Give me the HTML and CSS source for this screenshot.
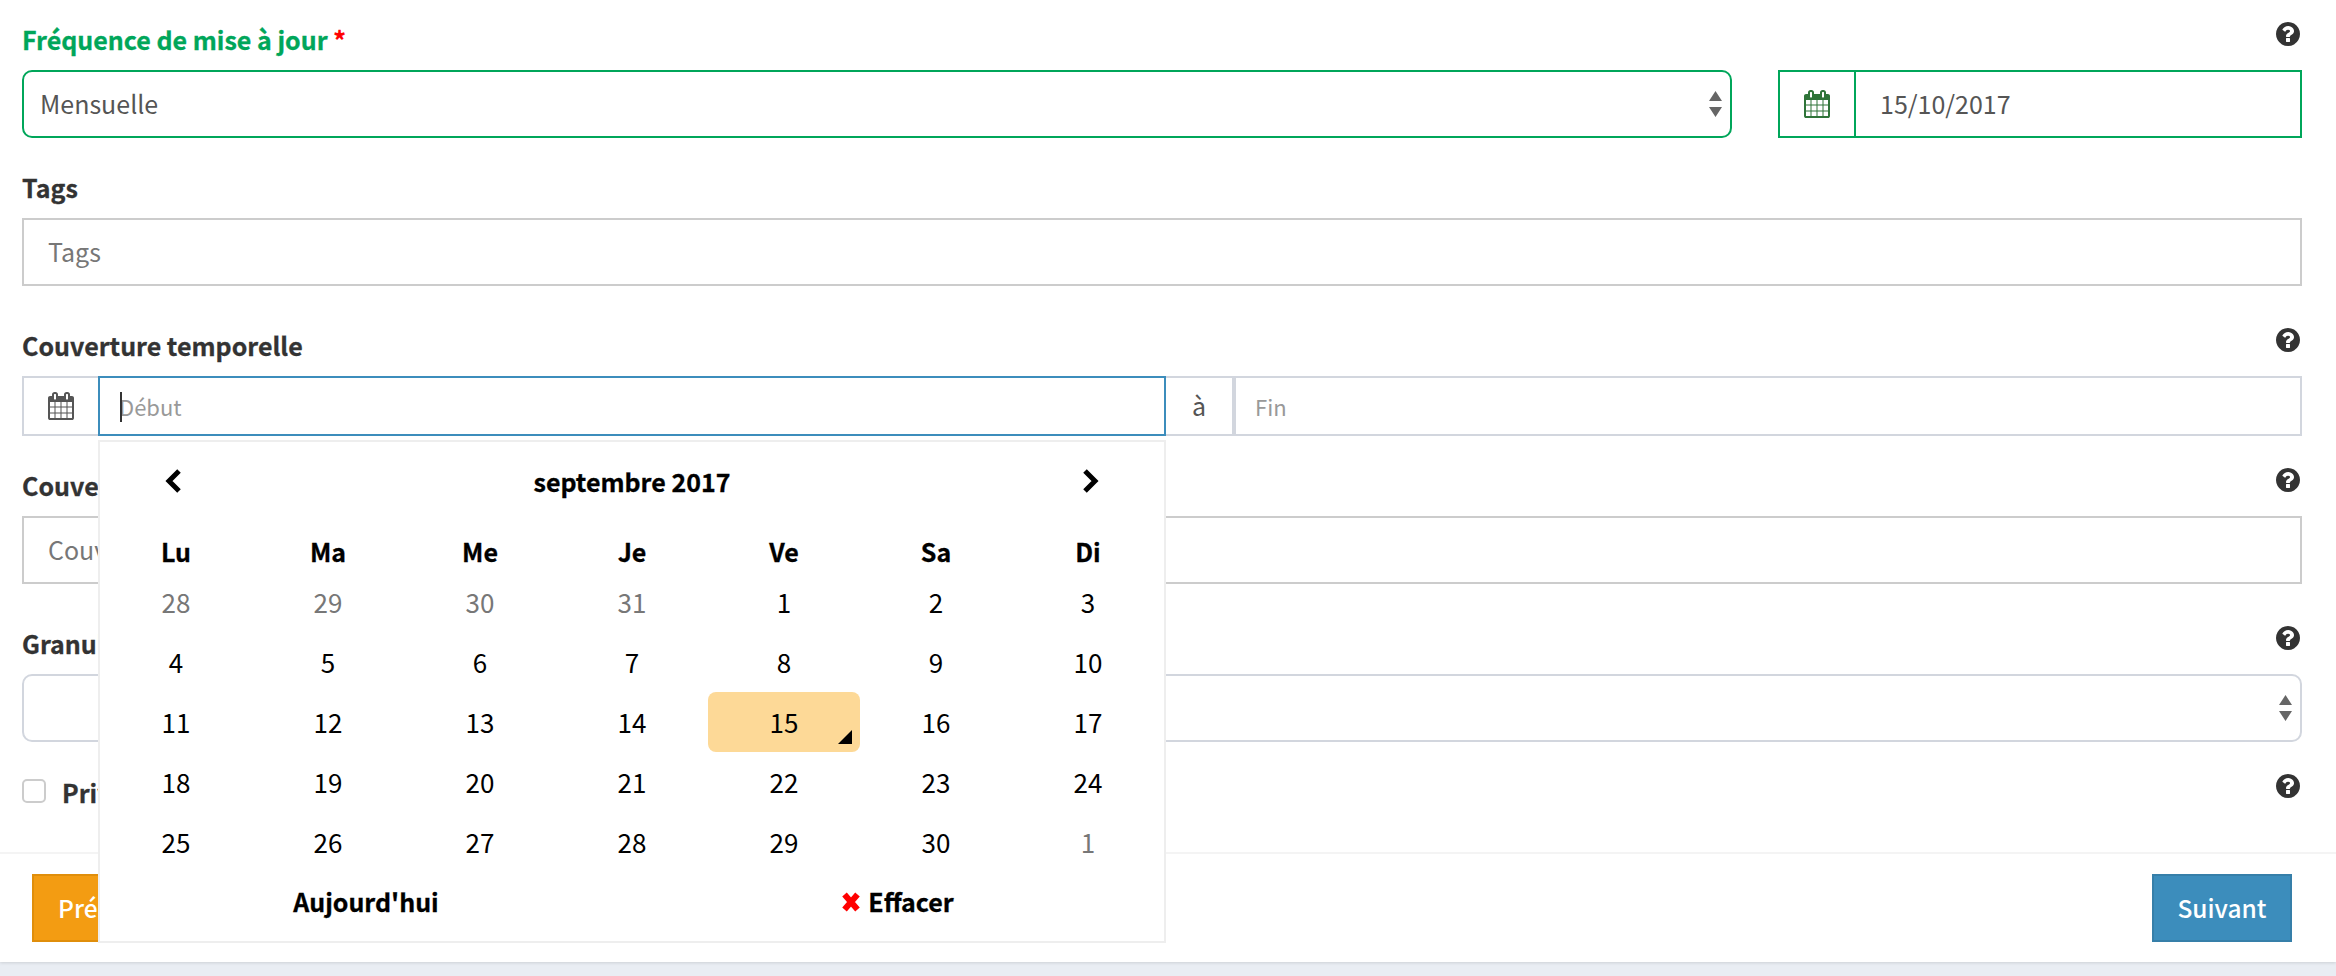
FILE: index.html
```html
<!DOCTYPE html>
<html lang="fr">
<head>
<meta charset="utf-8">
<title>Formulaire</title>
<link rel="stylesheet" href="styles.css">
</head>
<body>
<svg class="defs" width="0" height="0" aria-hidden="true">
  <symbol id="help" viewBox="0 0 1536 1536"><path d="M896 1376v-192q0-14-9-23t-23-9h-192q-14 0-23 9t-9 23v192q0 14 9 23t23 9h192q14 0 23-9t9-23zm256-672q0-88-55.5-163t-138.5-116-170-41q-243 0-371 213-15 24 8 42l132 100q7 6 19 6 16 0 25-12 53-68 86-92 34-24 86-24 48 0 85.5 26t37.5 59q0 38-20 61t-68 45q-63 28-115.5 86.5t-52.5 125.5v36q0 14 9 23t23 9h192q14 0 23-9t9-23q0-19 21.5-49.5t54.5-49.5q32-18 49-28.5t46-35 44.5-48 28-60.5 12.5-81zm384 192q0 209-103 385.5t-279.5 279.5-385.5 103-385.5-103-279.5-279.5-103-385.5 103-385.5 279.5-279.5 385.5-103 385.5 103 279.5 279.5 103 385.5z" transform="translate(0 -128)"/></symbol>
  <symbol id="cal" viewBox="0 0 1664 1792"><path d="M128 1664h288v-288h-288v288zm352 0h320v-288h-320v288zm-352-352h288v-320h-288v320zm352 0h320v-320h-320v320zm-352-384h288v-288h-288v288zm736 736h320v-288h-320v288zm-384-736h320v-288h-320v288zm768 736h288v-288h-288v288zm-384-352h320v-320h-320v320zm-352-864v-288q0-13-9.5-22.5t-22.5-9.5h-64q-13 0-22.5 9.5t-9.5 22.5v288q0 13 9.5 22.5t22.5 9.5h64q13 0 22.5-9.5t9.5-22.5zm736 864h288v-320h-288v320zm-384-384h320v-288h-320v288zm384 0h288v-288h-288v288zm32-480v-288q0-13-9.5-22.5t-22.5-9.5h-64q-13 0-22.5 9.5t-9.5 22.5v288q0 13 9.5 22.5t22.5 9.5h64q13 0 22.5-9.5t9.5-22.5zm384-64v1280q0 52-38 90t-90 38h-1408q-52 0-90-38t-38-90v-1280q0-52 38-90t90-38h128v-96q0-66 47-113t113-47h64q66 0 113 47t47 113v96h384v-96q0-66 47-113t113-47h64q66 0 113 47t47 113v96h128q52 0 90 38t38 90z"/></symbol>
  <symbol id="updown" viewBox="0 0 13 26"><path d="M6.5 0L13 10H0zM0 16h13L6.5 26z"/></symbol>
</svg>
<div class="page">
  <form class="form">
    <div class="group first">
      <div class="label-row">
        <label class="label valid">Fréquence de mise à jour <span class="req">*</span></label>
        <svg class="help"><use href="#help"/></svg>
      </div>
      <div class="freq-row">
        <div class="select valid-box"><span class="select-text">Mensuelle</span><svg class="updown"><use href="#updown"/></svg></div>
        <div class="date-box">
          <span class="date-addon"><svg class="cal cal-green"><use href="#cal"/></svg></span>
          <span class="date-value">15/10/2017</span>
        </div>
      </div>
    </div>

    <div class="group">
      <div class="label-row"><label class="label">Tags</label></div>
      <div class="input">Tags</div>
    </div>

    <div class="group wide">
      <div class="label-row">
        <label class="label">Couverture temporelle</label>
        <svg class="help"><use href="#help"/></svg>
      </div>
      <div class="range">
        <span class="range-addon"><svg class="cal"><use href="#cal"/></svg></span>
        <div class="range-input focus"><span class="caret"></span>Début</div>
        <span class="range-to">à</span>
        <div class="range-input end">Fin</div>

        <div class="picker">
          <div class="picker-head">
            <svg class="chev" viewBox="0 0 18 26"><path d="M15 3L5 13l10 10"/></svg>
            <span class="picker-title">septembre 2017</span>
            <svg class="chev" viewBox="0 0 18 26"><path d="M3 3l10 10L3 23"/></svg>
          </div>
          <div class="days">
            <span class="dow">Lu</span><span class="dow">Ma</span><span class="dow">Me</span><span class="dow">Je</span><span class="dow">Ve</span><span class="dow">Sa</span><span class="dow">Di</span>
            <span class="day old">28</span><span class="day old">29</span><span class="day old">30</span><span class="day old">31</span><span class="day">1</span><span class="day">2</span><span class="day">3</span>
            <span class="day">4</span><span class="day">5</span><span class="day">6</span><span class="day">7</span><span class="day">8</span><span class="day">9</span><span class="day">10</span>
            <span class="day">11</span><span class="day">12</span><span class="day">13</span><span class="day">14</span><span class="day today">15<i class="corner"></i></span><span class="day">16</span><span class="day">17</span>
            <span class="day">18</span><span class="day">19</span><span class="day">20</span><span class="day">21</span><span class="day">22</span><span class="day">23</span><span class="day">24</span>
            <span class="day">25</span><span class="day">26</span><span class="day">27</span><span class="day">28</span><span class="day">29</span><span class="day">30</span><span class="day old">1</span>
          </div>
          <div class="picker-foot">
            <span class="foot-btn">Aujourd'hui</span>
            <span class="foot-btn"><svg class="cross" viewBox="0 0 18 20"><path d="M2.5 2.5l13 15M15.5 2.5l-13 15"/></svg>Effacer</span>
          </div>
        </div>
      </div>
    </div>

    <div class="group">
      <div class="label-row">
        <label class="label">Couverture spatiale</label>
        <svg class="help"><use href="#help"/></svg>
      </div>
      <div class="input">Couverture spatiale</div>
    </div>

    <div class="group wide">
      <div class="label-row">
        <label class="label">Granularité spatiale</label>
        <svg class="help"><use href="#help"/></svg>
      </div>
      <div class="select plain"><span class="select-text"></span><svg class="updown"><use href="#updown"/></svg></div>
    </div>

    <div class="group check-row">
      <span class="checkbox"></span>
      <label class="label check-label">Privé</label>
      <svg class="help"><use href="#help"/></svg>
    </div>
  </form>
  <div class="footer">
    <button type="button" class="btn btn-prev">Précédent</button>
    <button type="button" class="btn btn-next">Suivant</button>
  </div>
</div>
</body>
</html>
```

FILE: styles.css
```css
* { box-sizing: border-box; }
html, body { margin: 0; padding: 0; }
body {
  background: #e9edf3;
  height: 976px;
  overflow: hidden;
  font-family: "Noto Sans CJK JP", "Noto Sans", sans-serif;
  font-size: 25px;
  color: #333;
}
.defs { position: absolute; }
.page {
  background: #fff;
  height: 962px;
  box-shadow: 0 1px 3px rgba(0, 0, 0, .12);
}
.form { height: 852px; padding: 22px 34px 0 22px; }
.group { margin-top: 32px; }
.group.first { margin-top: 0; }
.group.wide { margin-top: 42px; }
.label-row { display: flex; justify-content: space-between; align-items: flex-start; height: 40px; margin-bottom: 8px; }
.label { font-weight: 700; font-size: 25px; line-height: 34px; color: #333; -webkit-text-stroke: .3px currentColor; }
.label.valid { color: #00a65a; }
.req { color: #f00; }
.help { width: 24px; height: 24px; fill: #333; display: block; flex: none; margin-right: 2px; }

.freq-row { display: flex; gap: 46px; }
.select {
  flex: 1;
  height: 68px;
  display: flex;
  align-items: center;
  justify-content: space-between;
  padding: 0 8px 2px 16px;
  border: 2px solid #d2d6de;
  border-radius: 10px;
  font-size: 25px;
  color: #555;
}
.select.valid-box { border-color: #00a65a; }
.updown { width: 13px; height: 26px; fill: #666; display: block; margin-top: 2px; }
.date-box {
  width: 524px;
  height: 68px;
  display: flex;
  border: 2px solid #00a65a;
  align-items: center;
}
.date-addon {
  width: 76px;
  height: 100%;
  display: flex;
  align-items: center;
  justify-content: center;
  border-right: 2px solid #00a65a;
}
.date-value { padding: 0 0 2px 24px; color: #555; font-size: 25px; }
.cal { width: 26px; height: 28px; fill: #555; display: block; }
.cal-green { fill: #2f7439; }

.input {
  height: 68px;
  border: 2px solid #ccc;
  padding: 0 24px 2px;
  display: flex;
  align-items: center;
  font-size: 25px;
  color: #777;
}

.range { position: relative; display: flex; height: 60px; }
.range-addon {
  width: 76px;
  display: flex;
  align-items: center;
  justify-content: center;
  border: 2px solid #d2d6de;
  border-right: 0;
}
.range-input {
  display: flex;
  align-items: center;
  padding: 0 19px;
  font-size: 22px;
  color: #999;
  border: 2px solid #d2d6de;
}
.range-input.focus { width: 1068px; border-color: #3c8dbc; position: relative; }
.range-input.end { flex: 1; }
.caret { position: absolute; left: 20px; top: 14px; width: 2px; height: 30px; background: #333; }
.range-to {
  width: 68px;
  display: flex;
  align-items: center;
  justify-content: center;
  border: 2px solid #d2d6de;
  border-left: 0;
  color: #555;
  font-size: 25px;
  padding-bottom: 3px;
}

.picker {
  position: absolute;
  left: 76px;
  top: 64px;
  width: 1068px;
  height: 503px;
  z-index: 5;
  background: #fff;
  border: 2px solid #eee;
  color: #000;
}
.picker-head {
  display: flex;
  align-items: center;
  justify-content: space-between;
  height: 78px;
  padding: 0 64px;
}
.picker-title { font-weight: 700; font-size: 25px; -webkit-text-stroke: .3px currentColor; }
.chev { width: 18px; height: 26px; fill: none; stroke: #000; stroke-width: 5; display: block; }
.days { display: grid; grid-template-columns: repeat(7, 152px); grid-template-rows: 52px; grid-auto-rows: 60px; }
.dow { font-weight: 700; font-size: 25px; display: flex; align-items: flex-end; justify-content: center; padding-bottom: 3px; -webkit-text-stroke: .3px currentColor; }
.day { position: relative; display: flex; align-items: center; justify-content: center; font-size: 26px; padding-bottom: 1px; }
.day.old { color: #777; }
.day.today { background: #fdd997; border-radius: 8px; }
.corner {
  position: absolute;
  right: 8px;
  bottom: 8px;
  border-style: solid;
  border-width: 0 0 14px 14px;
  border-color: transparent transparent #000 transparent;
}
.picker-foot { display: grid; grid-template-columns: 532px 532px; height: 60px; }
.foot-btn { display: flex; align-items: center; justify-content: center; gap: 8px; font-weight: 700; font-size: 25px; padding-bottom: 2px; -webkit-text-stroke: .3px currentColor; }
.cross { width: 18px; height: 20px; fill: none; stroke: #f00; stroke-width: 6; display: block; margin-top: 2px; }

.check-row { display: flex; align-items: flex-start; }
.checkbox { width: 24px; height: 24px; border: 2px solid #ccc; border-radius: 5px; margin: 5px 16px 0 0; background: #fff; }
.check-label { flex: 1; line-height: 36px; }

.footer {
  height: 110px;
  border-top: 2px solid #f4f4f4;
  padding: 20px 44px 0 32px;
  display: flex;
  justify-content: space-between;
}
.btn {
  height: 68px;
  border-width: 2px;
  border-style: solid;
  border-radius: 0;
  padding: 0 24px 2px;
  font-family: inherit;
  font-size: 24.5px;
  font-weight: 500;
  color: #fff;
}
.btn-prev { background: #f39c12; border-color: #e08e0b; }
.btn-next { background: #3c8dbc; border-color: #367fa9; width: 140px; padding: 0 0 2px; }
```
